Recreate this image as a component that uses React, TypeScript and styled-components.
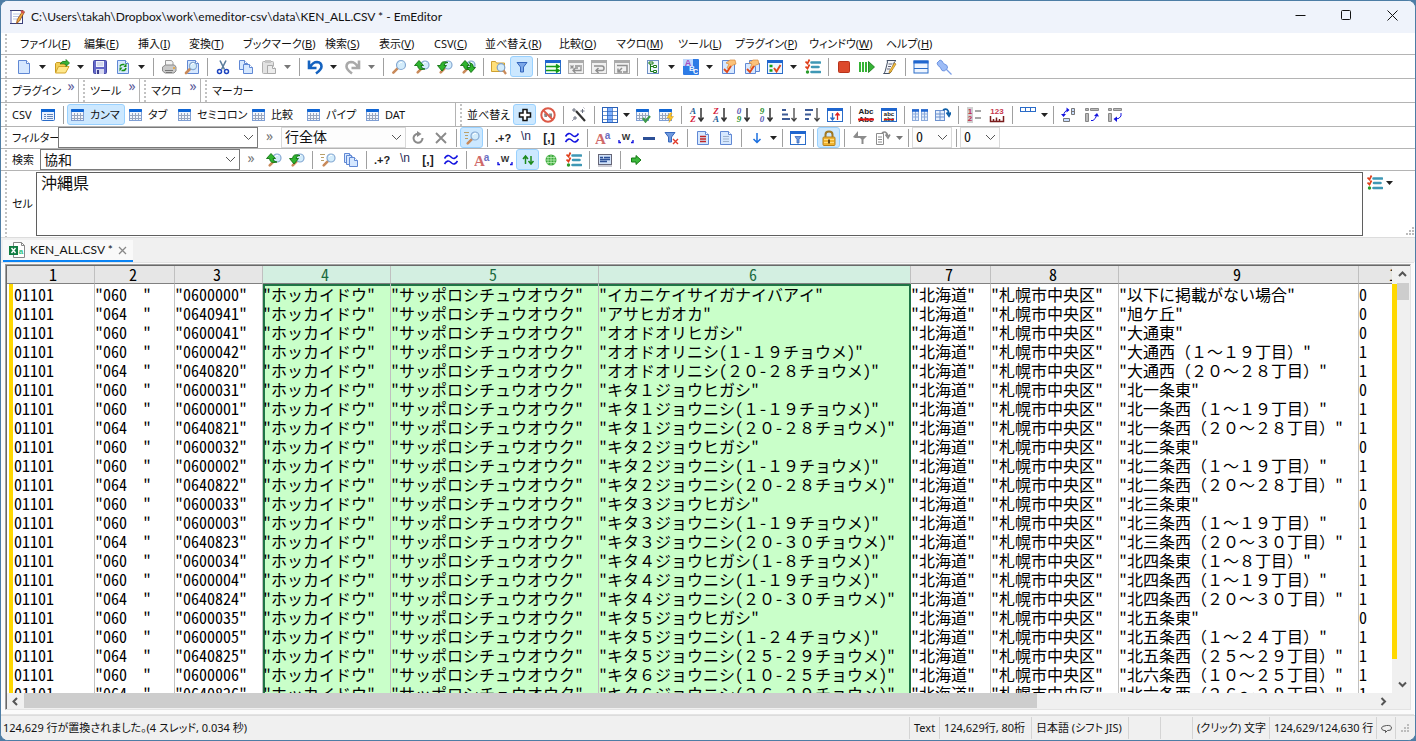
import React from "react";
import styled, { createGlobalStyle, css } from "styled-components";

const uiFont = `"Noto Sans", "Noto Sans CJK JP", sans-serif`;
const titleFont = `Roboto, "Noto Sans CJK JP", sans-serif`;
const gridFont = `"Noto Sans Mono CJK JP", "Noto Sans CJK JP", monospace`;

const GlobalStyle = createGlobalStyle`
  *, *::before, *::after { box-sizing: border-box; }
  body { margin: 0; background: #4d7da5; color: #111; font: 11px/16px ${uiFont}; }
  button, input, select, textarea { font: inherit; color: inherit; margin: 0; }
  svg { display: block; flex: none; }
`;

const Window = styled.div`
  display: flex;
  flex-direction: column;
  height: 100vh;
  border: 1px solid #4d7da5;
  border-radius: 8px;
  background: #fff;
  overflow: hidden;
  font-feature-settings: "palt";
`;

const TitleBar = styled.header`
  display: flex;
  align-items: center;
  flex: none;
  height: 32px;
  padding-left: 8px;
  gap: 6px;
  background: #eff3fb;
`;
const Title = styled.h1`
  flex: 1;
  margin: 0;
  font: 400 12px/16px Lato, ${titleFont};
  white-space: nowrap;
`;
const Captions = styled.div`
  display: flex;
  align-self: flex-start;
`;
const Caption = styled.button`
  display: grid;
  place-items: center;
  width: 46px;
  height: 29px;
  padding: 0;
  border: 0;
  background: none;
`;

const Bar = styled.div<{ $h: number }>`
  display: flex;
  align-items: center;
  flex: none;
  height: ${(p) => p.$h}px;
  padding-left: 4px;
  border-bottom: 1px solid #b4b4b4;
  white-space: nowrap;
  overflow: hidden;
`;
const Grip = styled.span`
  align-self: stretch;
  flex: none;
  width: 2px;
  margin: 1px 5px 0 0;
  background: repeating-linear-gradient(#c2c2c2 0 2px, transparent 2px 4px);
`;
const MenuBar = styled.nav`
  display: flex;
  padding-left: 8px;
`;
const MenuItem = styled.button<{ $w: number }>`
  width: ${(p) => p.$w}px;
  padding: 0;
  border: 0;
  background: none;
  text-align: left;
  white-space: nowrap;
`;

const Tool = styled.button<{ $on?: boolean; $w?: number }>`
  display: grid;
  place-items: center;
  flex: none;
  width: ${(p) => p.$w ?? 23}px;
  height: 21px;
  padding: 0;
  border: 1px solid transparent;
  border-radius: 3px;
  background: none;
  ${(p) =>
    p.$on &&
    css`
      background: #cce8ff;
      border-color: #99d1ff;
    `}
`;
const TextTool = styled(Tool)`
  display: flex;
  align-items: center;
  gap: 4px;
  padding-left: 2px;
`;
const Rule = styled.span`
  flex: none;
  width: 8px;
  height: 18px;
  background: linear-gradient(#a0a0a0, #a0a0a0) center / 1px 100% no-repeat;
`;
const Label = styled.label<{ $w: number }>`
  flex: none;
  width: ${(p) => p.$w}px;
`;
const Group = styled.div<{ $w: number }>`
  display: flex;
  align-items: center;
  justify-content: space-between;
  align-self: stretch;
  flex: none;
  width: ${(p) => p.$w}px;
  margin-right: 4px;
  border-right: 1px solid #b4b4b4;
`;
const Tabular = styled(Group)`
  justify-content: flex-start;
`;
const More = styled.button<{ $w: number; $gray?: boolean }>`
  align-self: flex-start;
  flex: none;
  width: ${(p) => p.$w}px;
  padding: 0;
  border: 0;
  background: none;
  color: ${(p) => (p.$gray ? "#777" : "#5a5a9a")};
  font-size: 14px;
  line-height: ${(p) => (p.$gray ? 18 : 14)}px;
`;
const Combo = styled.div<{ $w: number; $light?: boolean }>`
  display: grid;
  grid-template-columns: 1fr 18px;
  align-items: center;
  flex: none;
  width: ${(p) => p.$w}px;
  height: 21px;
  border: 1px solid ${(p) => (p.$light ? "#d9d9d9" : "#7a7a7a")};
  background: ${(p) => (p.$light ? "#fdfdfd" : "#fff")};
  input, select {
    grid-area: 1 / 1 / 2 / 3;
    width: 100%;
    height: 19px;
    padding: 0 3px 2px;
    border: 0;
    outline: 0;
    background: none;
    appearance: none;
    font: 300 14px/17px ${gridFont};
  }
  svg { grid-area: 1 / 2; justify-self: center; pointer-events: none; }
`;

const CellBar = styled.div`
  display: flex;
  align-items: center;
  flex: none;
  height: 67px;
  padding-left: 4px;
  border-bottom: 1px solid #dcdcdc;
`;
const CellBox = styled.textarea`
  flex: 1;
  height: 64px;
  padding: 0 4px;
  border: 1px solid #5f5f5f;
  outline: 0;
  resize: none;
  font: 300 16px/18px ${gridFont};
`;
const CellSide = styled.div`
  display: flex;
  flex-direction: column;
  justify-content: space-between;
  width: 52px;
  height: 64px;
  div { display: flex; align-items: center; }
  > svg { align-self: flex-end; }
`;

const TabStrip = styled.div`
  flex: none;
  height: 24px;
  padding: 2px 2px 0;
  background: #f0f0f0;
`;
const Tab = styled.button`
  display: flex;
  align-items: center;
  gap: 5px;
  height: 22px;
  padding: 0 6px;
  border: 0;
  border-bottom: 2px solid #0a84f5;
  background: #f9f9f9;
  font: 400 12px/16px Lato, ${titleFont};
`;

const Panel = styled.main`
  display: flex;
  flex: 1;
  min-height: 0;
  margin-right: 1px;
  padding: 1px 3px 4px 4px;
  border-top: 1px solid #e3e3e3;
  border-bottom: 1px solid #e3e3e3;
  background: #fbfbfb;
`;
const Sheet = styled.div`
  display: grid;
  grid-template-columns: 1fr 5px 13px;
  grid-template-rows: minmax(0, 1fr) 16px;
  flex: 1;
  min-width: 0;
  border: 1px solid #a0a0a0;
  border-right-color: #e3e3e3;
  border-bottom-color: #e3e3e3;
  box-shadow: inset 1px 1px 0 #696969;
  padding: 1px 0 0 1px;
  background: #f0f0f0;
`;
const Viewport = styled.div`
  overflow: hidden;
  background: #fff;
`;
const Grid = styled.table`
  table-layout: fixed;
  width: 1432px;
  border-collapse: separate;
  border-spacing: 0;
  font: 300 16px/19px ${gridFont};
  color: #000;
  white-space: pre;
`;
const Th = styled.th<{ $on: boolean }>`
  height: 18px;
  padding: 0 3px 0 0;
  border-right: 1px solid #c0c0c0;
  border-bottom: 1px solid #808080;
  background: ${(p) => (p.$on ? "#d3efe1" : "#e6e6e6")};
  color: ${(p) => (p.$on ? "#1b6b3f" : "#000")};
  font-weight: 300;
  line-height: 17px;
  &:first-child { padding: 0 0 0 5px; }
`;
const Row = styled.tr`
  &:first-child td { height: 20px; padding-top: 1px; }
`;
const Td = styled.td<{ $col: number; $top: boolean }>`
  height: 19px;
  padding: 0;
  overflow: hidden;
  border-right: 1px solid #c0c0c0;
  ${(p) =>
    p.$col === 0 &&
    css`
      padding-left: 7px;
      background: linear-gradient(to right, #fff 2px, #ffd800 2px 6px, #fff 6px);
    `}
  ${(p) => {
    if (p.$col < 3 || p.$col > 5) return "";
    const shadows = [
      p.$top && "inset 0 2px 0 #1f7446",
      p.$col === 3 && "inset 2px 0 0 #1f7446",
      p.$col === 5 && "inset -1px 0 0 #1f7446",
    ].filter(Boolean);
    return css`
      background: #c9ffc9;
      ${p.$col === 5 && "border-right-color: #1f7446;"}
      ${shadows.length > 0 && `box-shadow: ${shadows.join(", ")};`}
    `;
  }}
`;
const ChangeStrip = styled.div`
  margin: 18px 0 34px;
  background: #ffd800;
`;
const VScroll = styled.div`
  display: flex;
  flex-direction: column;
  justify-content: space-between;
`;
const VThumb = styled.div`
  width: 12px;
  height: 17px;
  background: #cdcdcd;
`;
const HScroll = styled.div`
  display: flex;
  align-items: center;
`;
const HTrack = styled.div`
  flex: 1;
  height: 16px;
`;
const HThumb = styled.div`
  width: 75%;
  height: 15px;
  background: #cdcdcd;
`;
const ScrollButton = styled.button<{ $w: number }>`
  display: grid;
  place-items: center;
  width: ${(p) => p.$w}px;
  height: 17px;
  padding: 0;
  border: 0;
  background: none;
`;

const StatusBar = styled.footer`
  display: flex;
  align-items: center;
  flex: none;
  height: 25px;
  border-top: 1px solid #dcdcdc;
  background: #f0f0f0;
`;
const Message = styled.span`
  flex: 1;
  padding-left: 2px;
  white-space: nowrap;
`;
const Pane = styled.span<{ $w: number }>`
  display: flex;
  align-items: center;
  flex: none;
  width: ${(p) => p.$w}px;
  height: 22px;
  padding-left: 4px;
  border-left: 1px solid #d4d4d4;
  white-space: nowrap;
`;

/* ---------- icon parts ---------- */
const Page = ({ x = 2, y = 1, w = 11, h = 14, gray = false }) => (
  <g>
    <path d={`M${x + 0.5} ${y + 0.5}h${w - 4}l3 3v${h - 4}h-${w - 1}z`} fill={gray ? "#ececec" : "#d6e8ff"} stroke={gray ? "#a9a9a9" : "#6088d4"} />
    <path d={`M${x + w - 3.5} ${y + 0.5}v3h3`} fill="#fff" stroke={gray ? "#a9a9a9" : "#6088d4"} />
  </g>
);
const Lens = ({ x = 10, y = 6, r = 4.5 }) => (
  <g>
    <path d={`M${x - r * 0.7} ${y + r * 0.7}L${x - r * 0.7 - 4.5} ${y + r * 0.7 + 4.5}`} stroke="#c98a5a" strokeWidth="2.600" strokeLinecap="round" />
    <circle cx={x} cy={y} r={r} fill="#d3ecfb" stroke="#86a9d2" strokeWidth="1.200" />
    <path d={`M${x - 2} ${y - 1}q1-2 3-1.600`} fill="none" stroke="#fff" />
  </g>
);
const WindowBox = ({ gray = false, fill = "#fff" }) => (
  <g>
    <rect x=".5" y="1.500" width="15" height="13" fill={gray ? "#f0f0f0" : fill} stroke={gray ? "#ababab" : "#2b6cc8"} />
    <rect x="0" y="1" width="16" height="3" fill={gray ? "#ababab" : "#1f66cf"} />
  </g>
);
const TableShape = () => (
  <g>
    <rect x="1.500" y="2.500" width="12" height="11" fill="#f2f6fd" stroke="#7f9fd4" />
    <path d="M4.500 6v7M7.500 6v7M10.500 6v7M2 8.500h11M2 11.500h11" stroke="#9aa6bd" />
    <rect x="1" y="2" width="13" height="3" rx="1" fill="#0f66d6" />
  </g>
);
const ListChecks = () => (
  <g>
    <path d="M6.500 3.500h8.500M7 8h6.500M6.500 13h8.500" stroke="#3f98b5" strokeWidth="2.600" strokeLinecap="round" />
    <path d="M.5 2.500l2 2L4.500.5M.5 7.500l2 2L4.500 5.500" fill="none" stroke="#e0401c" strokeWidth="1.700" />
    <circle cx="2.500" cy="13" r="1.700" fill="#2a9b2a" />
  </g>
);
type GlyphProps = { t: string; x?: number; y?: number; c?: string; s?: number; i?: boolean; b?: boolean; serif?: boolean };
const Letters = ({ t, x = 8, y = 12, c = "#222", s = 11, i = false, b = false, serif = false }: GlyphProps) => (
  <text x={x} y={y} fill={c} fontSize={s} textAnchor="middle" fontStyle={i ? "italic" : "normal"} fontWeight={b ? 700 : 400} fontFamily={serif ? '"Liberation Serif", serif' : '"Liberation Sans", sans-serif'}>{t}</text>
);
const Sorter = ({ a, b, ca, cb }: { a: string; b: string; ca: string; cb: string }) => (
  <g>
    <Letters t={a} x={4} y={7} s={9} c={ca} b i serif />
    <Letters t={b} x={4} y={15} s={9} c={cb} b i serif />
    <path d="M12 1v13M9.500 10.500l2.500 3.500 2.500-3.500" fill="none" stroke="#333" strokeWidth="1.500" />
  </g>
);
const Hand = () => <path d="M5 4l4-3h5l1 4-3 1-3 2-1 2-2-1 2-4z" fill="#fbc27a" stroke="#d8893b" strokeWidth=".7" />;
const GreenUp = () => <path d="M.5 6.500L5 1.500l4.500 5H7q0 3.500 4 3.500-7 2-7.500-3.500z" fill="#2fb52f" stroke="#127312" strokeWidth=".9" />;
const GreenDown = () => <path d="M.5 6.500L5 12l4.500-5.500H7q0-3 4-3-7-2.500-7.500 3z" fill="#2fb52f" stroke="#127312" strokeWidth=".9" />;

const icons: Record<string, React.ReactNode> = {
  new: <Page w={12} />,
  open: (
    <g>
      <path d="M1.500 13.500v-9l1-1h4l1 1.500h5v3" fill="#f3cf55" stroke="#c99a21" />
      <path d="M1.500 14l3-6.500H15L11.500 14z" fill="#ffe88c" stroke="#d3a52c" />
      <path d="M6 5q2-4 6-2.500V.5L15.500 4 12 7.500v-2Q9 4 6 5z" fill="#36b336" stroke="#137013" strokeWidth=".7" />
    </g>
  ),
  save: (
    <g>
      <rect x="1.500" y="1.500" width="13" height="13" rx="1" fill="#6468c8" stroke="#4548a4" />
      <rect x="4" y="2" width="8" height="6" fill="#f0f2fa" />
      <path d="M5 4h6M5 6h6" stroke="#b9bede" />
      <rect x="4" y="10" width="8" height="5" fill="#d8daf0" />
      <rect x="5" y="11" width="2" height="4" fill="#3c3f8f" />
    </g>
  ),
  reload: (
    <g>
      <Page x={2} w={12} />
      <path d="M5 7.500q.5-2 3-2h1.500M11 9q-.5 2.500-3 2.500H6.500" fill="none" stroke="#159015" strokeWidth="1.500" />
      <path d="M8.500 8h3V4zM7.500 8.500h-3v4z" fill="#159015" />
    </g>
  ),
  print: (
    <g>
      <path d="M4.500 7V1.500h6l1.500 2V7" fill="#f5f5f5" stroke="#9a9a9a" />
      <path d="M1.500 8l3-2h9l1.500 2v4l-2 2H4l-2.500-2z" fill="#c9c9c9" stroke="#8c8c8c" />
      <path d="M4 11.500h8M5 13.500h6" stroke="#777" />
      <circle cx="13" cy="9" r="1" fill="#e8a030" />
    </g>
  ),
  preview: <g><Page x={3} w={12} /><Lens x={9} y={7} r={3.6} /></g>,
  cut: (
    <g fill="none">
      <path d="M5 1.500l4.500 9M11 1.500l-4.500 9" stroke="#5a7c9c" strokeWidth="1.600" />
      <circle cx="4.500" cy="12.500" r="2" stroke="#1d44c0" strokeWidth="1.500" />
      <circle cx="11.500" cy="12.500" r="2" stroke="#1d44c0" strokeWidth="1.500" />
    </g>
  ),
  copy: <g><Page x={1} y={1} w={9} h={10} /><Page x={5} y={5} w={10} h={10} /></g>,
  paste: (
    <g>
      <rect x="1.500" y="2.500" width="11" height="12" rx="1" fill="#e2e2e2" stroke="#b0b0b0" />
      <rect x="4" y="1" width="6" height="3" fill="#c6c6c6" />
      <Page x={6} y={6} w={9} h={9} gray />
    </g>
  ),
  undo: <path d="M2 1.500v7.500h7.500M3 8Q6 3 10 3q4.500.5 4.500 4.500 0 3-5.500 7" fill="none" stroke="#1563c0" strokeWidth="2.600" />,
  redo: <path d="M14 1.500v7.500H6.500M13 8Q10 3 6 3q-4.500.5-4.500 4.500 0 3 5.500 7" fill="none" stroke="#a9a9a9" strokeWidth="2.600" />,
  find: <Lens x={10} y={6} />,
  findPrev: <g><Lens x={11} y={6} r={4} /><GreenUp /></g>,
  findNext: <g><Lens x={11} y={6} r={4} /><GreenDown /></g>,
  replace: <g><Lens x={11} y={6} r={4} /><GreenUp /><path d="M7 8.500l4 5 4.500-5h-2q0-4-4-5 2 2.500.5 5z" fill="#2fb52f" stroke="#127312" strokeWidth=".9" /></g>,
  findFiles: <g><path d="M.5 12.500v-10h4l1 1.500h8v8.500z" fill="#ffe07a" stroke="#cfa030" /><circle cx="10" cy="8.500" r="3.800" fill="#d3ecfb" stroke="#7f9fc8" strokeWidth="1.200" /><path d="M12.500 11.500l2.500 3.500" stroke="#c98a5a" strokeWidth="2.200" /></g>,
  filter: <path d="M3 3.500h10L9.500 8v5h-3V8z" fill="#7ba7e8" stroke="#3667bd" />,
  noWrap: <g><WindowBox fill="#f0fff0" /><path d="M1 7.500h12M1 11.500h12M11 5.500l3 2-3 2M11 9.500l3 2-3 2" fill="none" stroke="#159a15" strokeWidth="1.600" /></g>,
  wrap1: <g><WindowBox gray /><path d="M2.500 6.500l3 3M5.500 6.500l-3 3M7 7h5M7 9h3M13 6v5.500H5M7.500 9L5 11.500 7.500 14" fill="none" stroke="#8f8f8f" strokeWidth="1.300" /></g>,
  wrap2: <g><WindowBox gray /><path d="M3 7h8q2 0 2 2.300t-2 2.300H5M7.500 9L5 11.500 7.500 14" fill="none" stroke="#8f8f8f" strokeWidth="1.500" /></g>,
  wrap3: <g><WindowBox gray /><path d="M3 6.500h10v6.500H9M4 13l4-4M4 9.500V13h4" fill="none" stroke="#8f8f8f" strokeWidth="1.500" /></g>,
  outline: <g><rect x="2.500" y="1.500" width="11" height="13" fill="#eef5ff" stroke="#6f8fc4" /><path d="M5.500 4v8.500H9M5.500 7.500H9" fill="none" stroke="#1a7a1a" /><path d="M4 3h4v2H4zM8.500 6.500h3v2h-3zM8.500 11.500h3v2h-3z" fill="#fff" stroke="#1a7a1a" /></g>,
  abc: <g><rect x="0" y="0" width="16" height="16" rx="1" fill="#2e7be6" /><rect x="0" y="0" width="10" height="7" fill="#bfd8ff" /><Letters t="A" x={5} y={7} s={9} c="#a44fc0" b /><Letters t="B" x={9} y={12} s={8} c="#e8f2ff" b /><Letters t="C" x={12.5} y={15} s={7} c="#fff" b /></g>,
  config: <g><Page x={1} y={1} w={13} h={14} /><Hand /><path d="M3 10l3 3 4-6" fill="none" stroke="#e04a1c" strokeWidth="1.900" /></g>,
  configs: <g><Page x={5} y={1} w={11} h={12} /><Page x={1} y={4} w={11} h={11} /><Hand /><path d="M3 10l3 3 4-6" fill="none" stroke="#e04a1c" strokeWidth="1.900" /></g>,
  custom: <g><WindowBox fill="#eef5ff" /><path d="M2.500 7h3M2.500 11.500h3" stroke="#16a016" strokeWidth="2.400" /><path d="M7 9l2.500 3.500L13.500 6" fill="none" stroke="#e04a1c" strokeWidth="1.900" /></g>,
  checks: <ListChecks />,
  stop: <rect x="2.500" y="2.500" width="11" height="11" rx="1" fill="#dc4a2c" stroke="#b8331b" />,
  play: <g fill="#35b335"><rect x="0" y="3" width="2" height="10" /><rect x="3" y="3" width="2" height="10" /><rect x="6" y="3" width="2" height="10" /><path d="M9.500 2.500l6 5.500-6 5.500z" stroke="#117511" strokeWidth=".8" /></g>,
  script: <g><path d="M5 1.500h9q-2 1-2.500 4L9 13q-1 2-3 1.500H1.500Q3 14 3.500 11L5.500 3z" fill="#f4f6fa" stroke="#445064" /><path d="M6.500 5h4M6 7.500h3M5 10h3" stroke="#667" /><path d="M14 5l-5 8-2 1 .5-2 5-8z" fill="#f6c244" stroke="#b57e16" strokeWidth=".7" /></g>,
  window: <g><rect x="1" y="2" width="14" height="12" fill="#eef5ff" stroke="#2b6cc8" /><rect x=".5" y="1.500" width="15" height="3" fill="#1f66cf" /><path d="M1 9.500h14" stroke="#2b6cc8" /></g>,
  pin: <g><path d="M9.500 9.500l6 6" stroke="#7c9fe8" strokeWidth="1.300" /><path d="M1 4l3-3 2 1 1.500 2.500 3.500 2 .5 2.500-3 3-2.500-.5-2-3.500L2 6.500z" fill="#9dbcf6" stroke="#6f95e2" /></g>,
  csv: <g><rect x="1.500" y="2.500" width="13" height="11" rx="1" fill="#eaf2ff" stroke="#2b6cc8" /><rect x="1" y="2" width="14" height="3" fill="#0f66d6" /><path d="M4 7.500h2M7 7.500h6M4 9.500h2M7 9.500h6M4 11.500h2M7 11.500h6" stroke="#6484b8" /></g>,
  table: <TableShape />,
  cross: <path d="M6 2.500h4V6h3.500v4H10v3.500H6V10H2.500V6H6z" fill="#fff" stroke="#111" strokeWidth="1.500" />,
  noHead: <g><path d="M4 6.500h3V10H4.500zM9 6.500h3V10H9.500z" fill="#888" /><circle cx="8" cy="8" r="6.700" fill="none" stroke="#dd5a48" strokeWidth="2" /><path d="M3.500 3.500l9 9" stroke="#dd5a48" strokeWidth="2" /></g>,
  wand: <g stroke="#333"><path d="M5 4l9 10" strokeWidth="2.200" /><path d="M1 3h4M3 1v4M9.500 4h4M11.500 2v4M2 11h4M4 9v4" stroke="#6b7080" /><path d="M12.500.5l1 1M1 14l2-2" stroke="#99a" /></g>,
  columns: <g><rect x=".5" y=".5" width="15" height="15" fill="#fff" stroke="#2b62b8" /><rect x="5" y="1" width="5" height="14" fill="#7db0ff" /><path d="M5.500 1v14M10.500 1v14M1 4.500h14M1 8.500h14M1 12.500h14" stroke="#2b62b8" strokeWidth=".7" /></g>,
  tableCheck: <g><TableShape /><path d="M8 11l2.500 3.500L15 9" fill="none" stroke="#3f9a4a" strokeWidth="2.200" /></g>,
  tableBolt: <g><TableShape /><path d="M12 6l-3 5h3l-1 4.500 4.500-6H12.500L14 6z" fill="#ffc629" stroke="#e0a010" strokeWidth=".5" /></g>,
  az: <Sorter a="A" b="Z" ca="#1d5c96" cb="#d3203a" />,
  za: <Sorter a="Z" b="A" ca="#d3203a" cb="#1d5c96" />,
  n09: <Sorter a="0" b="9" ca="#5a5ab4" cb="#2a8f2a" />,
  n90: <Sorter a="9" b="0" ca="#2a8f2a" cb="#5a5ab4" />,
  lenUp: <g><path d="M1 3h4M1 7.500h6M1 12h8" stroke="#3c5a96" strokeWidth="2" /><path d="M13 1v13M10.500 11l2.500 3 2.500-3" fill="none" stroke="#444" strokeWidth="1.300" /></g>,
  lenDown: <g><path d="M1 3h8M1 7.500h6M1 12h4" stroke="#3c5a96" strokeWidth="2" /><path d="M13 1v13M10.500 11l2.500 3 2.500-3" fill="none" stroke="#444" strokeWidth="1.300" /></g>,
  sortOpt: <g><WindowBox /><path d="M5.500 6v7M3.500 10.500l2 2.500 2-2.500" fill="none" stroke="#2b6cc8" strokeWidth="1.300" /><path d="M10.500 13V6M8.500 8.500l2-2.500 2 2.500" fill="none" stroke="#e02020" strokeWidth="1.300" /></g>,
  dup: <g><Letters t="Abc" x={8} y={7} s={8} b /><Letters t="Abc" x={8} y={15} s={8} b /><path d="M0 12.500h16" stroke="#f01010" strokeWidth="1.800" /></g>,
  dupOpt: <g><WindowBox /><Letters t="abc" x={8} y={9} s={6} b /><Letters t="abc" x={8} y={14} s={6} b /><path d="M3 12.500h10" stroke="#f01010" /></g>,
  split: <g fill="#e6effc" stroke="#8cabdc"><rect x=".5" y="2.500" width="6" height="11" /><rect x="9.500" y="2.500" width="6" height="11" /><path d="M3.500 4v9M12.500 4v9M1 7h6M1 10h6M9 7h6M9 10h6" /><path d="M0 3.500h7M9 3.500h7" stroke="#1f66cf" strokeWidth="2.500" /></g>,
  move: <g><rect x=".5" y="3.500" width="9" height="10" fill="#e6effc" stroke="#6c92cf" /><path d="M1 7h9M1 10h9M5 4v9" stroke="#6c92cf" /><path d="M8 3q5-3 6 4M11.500 5.500L14 9l2-3.500" fill="none" stroke="#0f5fa8" strokeWidth="1.800" /></g>,
  head: <g><rect x="1" y="0" width="6" height="16" fill="#d0d0d0" /><Letters t="1" x={4} y={7} s={8} c="#c03050" b /><Letters t="2" x={4} y={14} s={8} c="#c03050" b /><path d="M9 4h6M9 11h6" stroke="#888" strokeWidth="1.600" /></g>,
  ruler: <g><Letters t="123" x={8} y={7} s={8} c="#c9364c" b /><path d="M1.500 9v5.500h13V9M4.500 12v2M7.500 10.500v4M10.500 12v2" fill="none" stroke="#7a1c1c" strokeWidth="1.500" /></g>,
  headRow: <g><rect x=".5" y=".5" width="15" height="4" fill="#fff" stroke="#2b6cc8" /><path d="M5.500 1v3M10.500 1v3" stroke="#2b6cc8" /></g>,
  pivot1: <g><path d="M10.500 1.500h3v6h-3zM10.500 4.500h3M2.500 11.500h6v3h-6z" fill="#c8ddff" stroke="#777" /><path d="M7.500 3q-4.500.5-5 6" fill="none" stroke="#1414e0" /><path d="M5.500.5l3 2.500-3 2.500zM0 7l2.500 3L5 7z" fill="#1414e0" /></g>,
  pivot2: <g><path d="M1.500 1.500h3v2h-3zM6.500 1.500h8v2h-8zM1.500 6.500h3v8h-3z" fill="#b9b9b9" stroke="#888" /><path d="M7 13.500h2q3-2 3.500-5" fill="none" stroke="#1414e0" /><path d="M10 9l3-3 2 3.500z" fill="#1414e0" /></g>,
  pivot3: <g><path d="M1.500 1.500h3v2h-3zM6.500 1.500h8v2h-8zM1.500 6.500h3v8h-3z" fill="#b9b9b9" stroke="#888" /><path d="M14 6v3q-1.500 3-5 3" fill="none" stroke="#1414e0" /><path d="M10 9.500L6.500 12l3.500 3z" fill="#1414e0" /></g>,
  refresh: <g><path d="M9.500 4A4.500 4.500 0 1 0 12.500 8" fill="none" stroke="#8a8a8a" strokeWidth="2" /><path d="M7 1v6l4.500-3z" fill="#8a8a8a" /></g>,
  clear: <path d="M3 3l10 10M13 3L3 13" stroke="#8a8a8a" strokeWidth="1.900" />,
  findInc: <g><path d="M0 2.500h5M1 5.500h3M1 8.500h3" stroke="#b9a06a" /><Lens x={11} y={6} r={4} /></g>,
  regex: <Letters t=".+?" s={11} b />,
  escape: <Letters t="\n" c="#2b2b55" s={12} y={10} />,
  range: <Letters t="[,]" b s={12} />,
  fuzzy: <path d="M1.500 6.500q3-5 6.500-1.500t6.500-1.500M1.500 12q3-5 6.500-1.500t6.500-1.500" fill="none" stroke="#1414e0" strokeWidth="1.600" />,
  matchCase: <g><Letters t="A" x={5.5} y={14} s={15} c="#cf6a6a" serif b /><Letters t="a" x={12.5} y={9} s={10} c="#6a6fc4" b /></g>,
  word: <g><Letters t="W" y={10} s={9} c="#333" b /><path d="M1 10v2.500h2M15 10v2.500h-2" fill="none" stroke="#1414e0" strokeWidth="1.400" /></g>,
  minus: <rect x="2" y="7" width="12" height="3" fill="#2c4f96" />,
  filterX: <g><path d="M1 2.500h10L7.500 7v5h-3V7z" fill="#6f9ade" stroke="#3667bd" /><path d="M9 9l5 5M14 9l-5 5" stroke="#e03a2a" strokeWidth="1.400" /></g>,
  docRed: <g><Page x={2} w={12} /><path d="M5 6.500h6M5 9h6M5 11.500h6" stroke="#c02626" strokeWidth="1.500" /></g>,
  doc: <g><Page x={2} w={12} /><path d="M5 6.500h6M5 9h6M5 11.500h6" stroke="#9fb3cc" /></g>,
  down: <path d="M8 3v9M4.500 9L8 12.500 11.500 9" fill="none" stroke="#1a6fe0" strokeWidth="1.500" />,
  filterBar: <g><WindowBox /><path d="M5 6.500h6l-2 3v3.500H7V9.500z" fill="#6f9ade" stroke="#3667bd" strokeWidth=".8" /></g>,
  lock: <g><path d="M4.500 7V4.500q0-3 3.500-3t3.500 3V7" fill="none" stroke="#a07822" strokeWidth="2" /><rect x="2" y="7" width="12" height="8.500" rx="1" fill="#f0b432" stroke="#b5801a" /><path d="M3 9.500h10M3 12.500h10" stroke="#ffdc80" /><rect x="7" y="9.500" width="2" height="4" fill="#6b4a10" /></g>,
  filterTab: <path d="M1 7l5-6v5h9l-3.500 3.500V14H9.500V9.500L8 8H3z" fill="#8c8c8c" />,
  extract: <g fill="none" stroke="#8c8c8c"><path d="M1.500 3.500h7v11h-7zM3 7h4M3 9.500h4M3 12h4" /><path d="M7 3q4-3 6 3M10.500 4.500L13 8l2-3.500" strokeWidth="1.600" /></g>,
  pages: <g><Page x={1} y={1} w={9} h={10} /><Page x={3} y={3} w={9} h={10} /><Page x={6} y={5} w={9} h={10} /></g>,
  upDown: <path d="M5.500 12V4M3 7l2.500-3L8 7M11 4v8M8.500 9l2.500 3 2.500-3" fill="none" stroke="#1c8a1c" strokeWidth="1.500" />,
  globe: <g><circle cx="8" cy="8" r="5.500" fill="#3aa83a" /><path d="M8 2.500v11M5 4v8M11 4v8M2.500 8h11M3.500 5.500h9M3.500 10.500h9" stroke="#c9f5c2" strokeWidth=".7" /></g>,
  output: <g><rect x="1.500" y="2.500" width="13" height="10" fill="#cfe0f8" stroke="#667" /><path d="M3 5.500h3M7 5.500h6M3 7.500h10M3 9.500h7" stroke="#2b4f96" strokeWidth="1.300" /><path d="M1 14h14" stroke="#99a" /></g>,
  go: <path d="M3.500 6h4.500V3.500L13 8l-5 4.500V10H3.500z" fill="#3cb83c" stroke="#137a13" />,
};

const Icon = ({ name }: { name: string }) => (
  <svg width="16" height="16" viewBox="0 0 16 16" aria-hidden="true">{icons[name]}</svg>
);
const Triangle = ({ gray = false }) => (
  <svg width="7" height="4" viewBox="0 0 7 4" aria-hidden="true"><path d="M0 0h7L3.500 4z" fill={gray ? "#777" : "#222"} /></svg>
);
const Chevron = ({ d = "M1 1l4.500 4.500L10 1", w = 11, h = 7, s = 1 }) => (
  <svg width={w} height={h} viewBox={`0 0 ${w} ${h}`} aria-hidden="true"><path d={d} fill="none" stroke="#555" strokeWidth={s} /></svg>
);

/* "|" is a separator, "v" and "c" are wide and narrow drop arrows ("g" after them greys them), a leading "*" marks a pressed button */
const Tools = ({ spec }: { spec: string }) => (
  <>
    {spec.split(" ").map((s, i) => {
      if (s === "|") return <Rule key={i} />;
      if (/^[vc]g?$/.test(s)) {
        return <Tool key={i} $w={s[0] === "c" ? 10 : 15} aria-label="menu"><Triangle gray={s[1] === "g"} /></Tool>;
      }
      const on = s[0] === "*";
      const name = on ? s.slice(1) : s;
      return <Tool key={i} $on={on} aria-label={name} aria-pressed={on}><Icon name={name} /></Tool>;
    })}
  </>
);

const menus: [string, string, number][] = [
  ["ファイル", "F", 64], ["編集", "E", 54], ["挿入", "I", 51], ["変換", "T", 54], ["ブックマーク", "B", 82],
  ["検索", "S", 54], ["表示", "V", 55], ["CSV", "C", 51], ["並べ替え", "R", 74], ["比較", "O", 57],
  ["マクロ", "M", 62], ["ツール", "L", 57], ["プラグイン", "P", 74], ["ウィンドウ", "W", 77], ["ヘルプ", "H", 60],
];

const formats: [string, number][] = [
  ["カンマ", 58], ["タブ", 49], ["セミコロン", 74], ["比較", 55], ["パイプ", 59], ["DAT", 46],
];

const widths = [88, 80, 88, 128, 208, 312, 80, 128, 240, 80];
const chome = (s: string) => `"${s}チョウメ)"`;
const records: [string, string, string, string, string][] = [
  ["060", "0600000", `"イカニケイサイガナイバアイ"`, "以下に掲載がない場合", "0"],
  ["064", "0640941", `"アサヒガオカ"`, "旭ケ丘", "0"],
  ["060", "0600041", `"オオドオリヒガシ"`, "大通東", "0"],
  ["060", "0600042", chome("オオドオリニシ(１-１９"), "大通西（１～１９丁目）", "1"],
  ["064", "0640820", chome("オオドオリニシ(２０-２８"), "大通西（２０～２８丁目）", "1"],
  ["060", "0600031", `"キタ１ジョウヒガシ"`, "北一条東", "0"],
  ["060", "0600001", chome("キタ１ジョウニシ(１-１９"), "北一条西（１～１９丁目）", "1"],
  ["064", "0640821", chome("キタ１ジョウニシ(２０-２８"), "北一条西（２０～２８丁目）", "1"],
  ["060", "0600032", `"キタ２ジョウヒガシ"`, "北二条東", "0"],
  ["060", "0600002", chome("キタ２ジョウニシ(１-１９"), "北二条西（１～１９丁目）", "1"],
  ["064", "0640822", chome("キタ２ジョウニシ(２０-２８"), "北二条西（２０～２８丁目）", "1"],
  ["060", "0600033", `"キタ３ジョウヒガシ"`, "北三条東", "0"],
  ["060", "0600003", chome("キタ３ジョウニシ(１-１９"), "北三条西（１～１９丁目）", "1"],
  ["064", "0640823", chome("キタ３ジョウニシ(２０-３０"), "北三条西（２０～３０丁目）", "1"],
  ["060", "0600034", chome("キタ４ジョウヒガシ(１-８"), "北四条東（１～８丁目）", "1"],
  ["060", "0600004", chome("キタ４ジョウニシ(１-１９"), "北四条西（１～１９丁目）", "1"],
  ["064", "0640824", chome("キタ４ジョウニシ(２０-３０"), "北四条西（２０～３０丁目）", "1"],
  ["060", "0600035", `"キタ５ジョウヒガシ"`, "北五条東", "0"],
  ["060", "0600005", chome("キタ５ジョウニシ(１-２４"), "北五条西（１～２４丁目）", "1"],
  ["064", "0640825", chome("キタ５ジョウニシ(２５-２９"), "北五条西（２５～２９丁目）", "1"],
  ["060", "0600006", chome("キタ６ジョウニシ(１０-２５"), "北六条西（１０～２５丁目）", "1"],
  ["064", "0640826", chome("キタ６ジョウニシ(２６-２９"), "北六条西（２６～２９丁目）", "1"],
];
const rows = records.map(([old, zip, area, town, flag]) => [
  "01101", `"${old}  "`, `"${zip}"`, `"ホッカイドウ"`, `"サッポロシチュウオウク"`, area, `"北海道"`, `"札幌市中央区"`, `"${town}"`, flag,
]);

const SizeGrip = () => (
  <svg width="10" height="10" viewBox="0 0 10 10" aria-hidden="true"><path d="M7 1h2v2H7zM4 4h2v2H4zM7 4h2v2H7zM1 7h2v2H1zM4 7h2v2H4zM7 7h2v2H7z" fill="#bcbcbc" /></svg>
);

export default function App() {
  return (
    <Window>
      <GlobalStyle />
      <TitleBar>
        <svg width="16" height="16" viewBox="0 0 16 16" aria-hidden="true">
          <rect x="1.500" y="1.500" width="12" height="13" fill="#fff" stroke="#3a3f78" />
          <path d="M1 2h2v12H1z" fill="#aab0d8" />
          <path d="M4 5h7M4 7.500h6M4 10h4" stroke="#b9c3e6" />
          <path d="M14 1.500l1.500 1.500-5 9-3 2.500.8-4z" fill="#f2a93a" stroke="#8a4a1a" strokeWidth=".8" />
          <path d="M12.500 1l3 2-1 2-3-2z" fill="#d05050" />
        </svg>
        <Title>C:\Users\takah\Dropbox\work\emeditor-csv\data\KEN_ALL.CSV * - EmEditor</Title>
        <Captions>
          <Caption aria-label="Minimize"><svg width="11" height="11"><path d="M.5 5.500h10" stroke="#111" /></svg></Caption>
          <Caption aria-label="Maximize"><svg width="11" height="11"><rect x=".5" y=".5" width="9" height="9" rx="1" fill="none" stroke="#111" /></svg></Caption>
          <Caption aria-label="Close"><svg width="11" height="11"><path d="M.5.5l10 10M10.500.5l-10 10" stroke="#111" /></svg></Caption>
        </Captions>
      </TitleBar>

      <Bar $h={22}>
        <Grip />
        <MenuBar>
          {menus.map(([name, key, w]) => (
            <MenuItem key={key} $w={w}>{name}(<u>{key}</u>)</MenuItem>
          ))}
        </MenuBar>
      </Bar>

      <Bar $h={24}>
        <Grip />
        <Tools spec="new v open v save reload v | print preview | cut copy paste vg | undo v redo vg | find findPrev findNext replace | findFiles *filter | noWrap wrap1 wrap2 wrap3 | outline v abc v config configs custom v checks | stop play script | window pin" />
      </Bar>

      <Bar $h={24}>
        <Grip />
        <Group $w={67}><span>プラグイン</span><More $w={14}>»</More></Group>
        <Grip />
        <Group $w={50}><span>ツール</span><More $w={14}>»</More></Group>
        <Grip />
        <Group $w={50}><span>マクロ</span><More $w={14}>»</More></Group>
        <Grip />
        <span>マーカー</span>
      </Bar>

      <Bar $h={24}>
        <Grip />
        <Tabular $w={444}>
          <Label as="span" $w={24}>CSV</Label>
          <Tools spec="csv |" />
          {formats.map(([t, w], i) => (
            <TextTool key={t} $w={w} $on={i === 0} aria-pressed={i === 0}><Icon name="table" />{t}</TextTool>
          ))}
        </Tabular>
        <Grip />
        <Label as="span" $w={46}>並べ替え</Label>
        <Tools spec="*cross noHead | wand | columns c tableCheck tableBolt | az za n09 n90 lenUp lenDown sortOpt | dup dupOpt | split move | head ruler | headRow c | pivot1 pivot2 pivot3" />
      </Bar>

      <Bar $h={22}>
        <Grip />
        <Label $w={46} htmlFor="filter">フィルター</Label>
        <Combo $w={200}><input id="filter" /><Chevron /></Combo>
        <More $w={23} $gray>»</More>
        <Combo $w={125} $light><select aria-label="列"><option>行全体</option></select><Chevron /></Combo>
        <Tools spec="refresh clear | *findInc | regex escape range fuzzy | matchCase word minus filterX | docRed doc | down c | filterBar | *lock | filterTab extract cg |" />
        <Combo $w={40} $light><select aria-label="上"><option>0</option></select><Chevron /></Combo>
        <Rule />
        <Combo $w={40} $light><select aria-label="下"><option>0</option></select><Chevron /></Combo>
      </Bar>

      <Bar $h={22}>
        <Grip />
        <Label $w={28} htmlFor="search">検索</Label>
        <Combo $w={200}><input id="search" defaultValue="協和" /><Chevron /></Combo>
        <More $w={22} $gray>»</More>
        <Tools spec="findPrev findNext | findInc pages | regex escape range fuzzy | matchCase word *upDown globe checks | output | go" />
      </Bar>

      <CellBar>
        <Grip />
        <Label $w={24} htmlFor="cell">セル</Label>
        <CellBox id="cell" defaultValue="沖縄県" />
        <CellSide>
          <div><Tool aria-label="checks"><Icon name="checks" /></Tool><Triangle /></div>
          <SizeGrip />
        </CellSide>
      </CellBar>

      <TabStrip>
        <Tab>
          <svg width="16" height="16" viewBox="0 0 16 16" aria-hidden="true">
            <path d="M4.500.5h8l3 3v12h-11z" fill="#fff" stroke="#888" />
            <path d="M12.500.5v3h3" fill="none" stroke="#888" />
            <rect x="0" y="4" width="9" height="9" fill="#107c41" />
            <path d="M2.500 6l4 5M6.500 6l-4 5" stroke="#fff" strokeWidth="1.400" />
            <Letters t="a" x={12} y={12} s={8} c="#2ec27e" b />
          </svg>
          KEN_ALL.CSV *
          <svg width="9" height="9" aria-hidden="true"><path d="M1 1l7 7M8 1L1 8" stroke="#888" strokeWidth="1.300" /></svg>
        </Tab>
      </TabStrip>

      <Panel>
        <Sheet>
          <Viewport>
            <Grid>
              <colgroup>{widths.map((w, i) => <col key={i} width={w} />)}</colgroup>
              <thead>
                <tr>{widths.map((_, i) => <Th key={i} $on={i > 2 && i < 6}>{i + 1}</Th>)}</tr>
              </thead>
              <tbody>
                {rows.map((r, y) => (
                  <Row key={y}>{r.map((c, x) => <Td key={x} $col={x} $top={y === 0}>{c}</Td>)}</Row>
                ))}
              </tbody>
            </Grid>
          </Viewport>
          <ChangeStrip />
          <VScroll>
            <div>
              <ScrollButton $w={10} aria-label="Up"><Chevron d="M1 5l3.500-3.500L8 5" w={9} h={7} s={2} /></ScrollButton>
              <VThumb />
            </div>
            <ScrollButton $w={10} aria-label="Down"><Chevron d="M1 1.500l3.500 3.500L8 1.500" w={9} h={7} s={2} /></ScrollButton>
          </VScroll>
          <HScroll>
            <ScrollButton $w={17} aria-label="Left"><Chevron d="M5 1L1.500 4.500 5 8" w={7} h={9} s={2} /></ScrollButton>
            <HTrack><HThumb /></HTrack>
            <ScrollButton $w={17} aria-label="Right"><Chevron d="M1.500 1L5 4.500 1.500 8" w={7} h={9} s={2} /></ScrollButton>
          </HScroll>
        </Sheet>
      </Panel>

      <StatusBar>
        <Message>124,629 行が置換されました。(4 スレッド, 0.034 秒)</Message>
        <Pane $w={30}>Text</Pane>
        <Pane $w={92}>124,629行, 80桁</Pane>
        <Pane $w={97}>日本語 (シフト JIS)</Pane>
        <Pane $w={32} />
        <Pane $w={32} />
        <Pane $w={77}>(クリック) 文字</Pane>
        <Pane $w={107}>124,629/124,630 行</Pane>
        <Pane $w={19}>
          <svg width="11" height="9" aria-hidden="true"><path d="M3 6.500Q.5 6 .5 4T5.500 1.500t5 2.500-4 2.500L4.500 8.500V6.500z" fill="none" stroke="#555" /></svg>
        </Pane>
        <Pane $w={20}><SizeGrip /></Pane>
      </StatusBar>
    </Window>
  );
}
